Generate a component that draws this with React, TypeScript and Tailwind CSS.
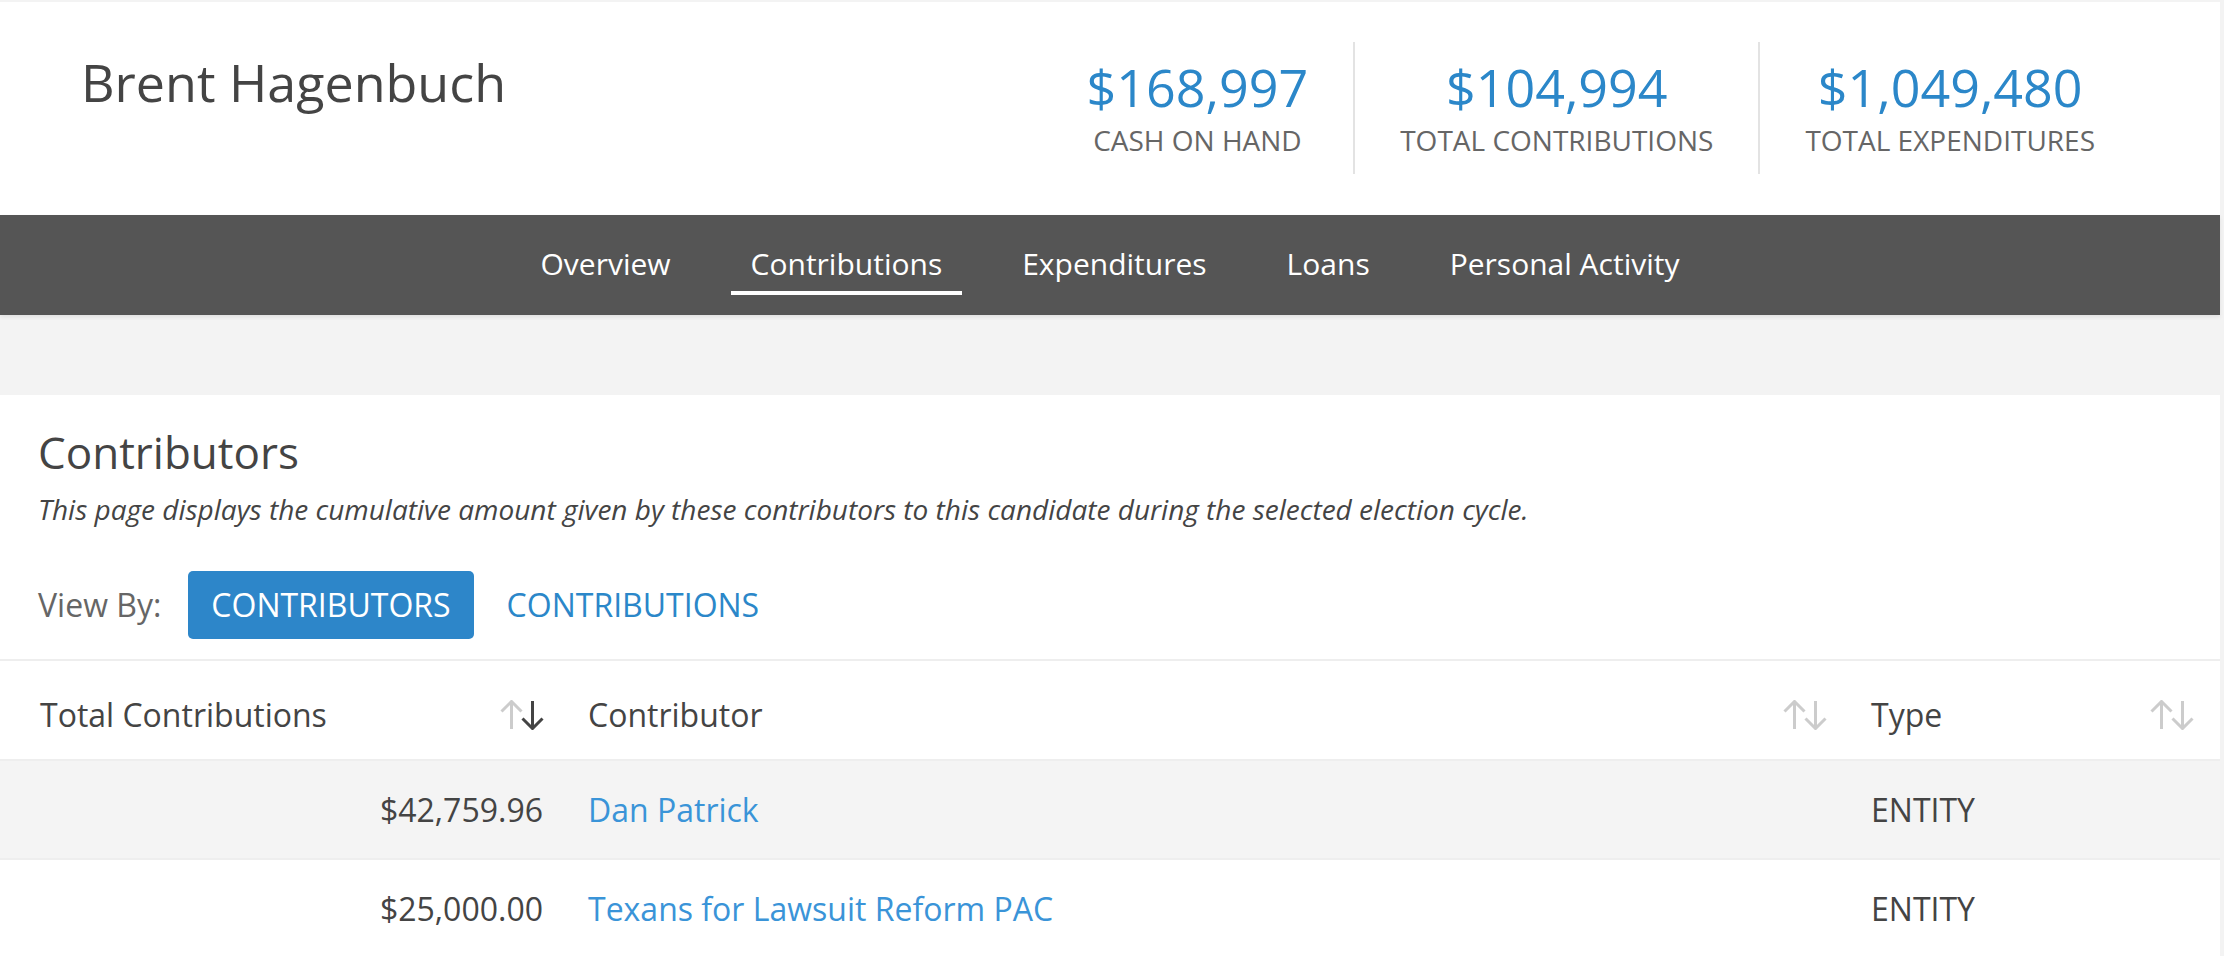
import React from 'react';

const stats = [
    { value: '$168,997', label: 'CASH ON HAND' },
    { value: '$104,994', label: 'TOTAL CONTRIBUTIONS' },
    { value: '$1,049,480', label: 'TOTAL EXPENDITURES' },
];

const tabs = ['Overview', 'Contributions', 'Expenditures', 'Loans', 'Personal Activity'];

const rows = [
    { amount: '$42,759.96', name: 'Dan Patrick', type: 'ENTITY' },
    { amount: '$25,000.00', name: 'Texans for Lawsuit Reform PAC', type: 'ENTITY' },
];

const SortIcon = ({ active = false }: { active?: boolean }) => (
    <svg width="45" height="30" viewBox="0 0 45 30" fill="none" strokeWidth="3" strokeLinecap="butt" strokeLinejoin="miter">
        <g stroke="#cccccc">
            <path d="M11.5 29V2" />
            <path d="M1.5 11.5L11.5 1.5L21.5 11.5" />
        </g>
        <g stroke={active ? '#444444' : '#cccccc'}>
            <path d="M32.5 1V28" />
            <path d="M22.5 18.5L32.5 28.5L42.5 18.5" />
        </g>
    </svg>
);

const App = () => {
    return (
        <div className="min-h-screen bg-[#f3f3f3] pt-[2px] pr-[4px] font-['Open_Sans',sans-serif] text-[#444]">
            <header className="bg-white h-[213px] flex justify-between pl-[81px] pr-[80px]">
                <h1 className="pt-[44px] text-[52px] leading-[71px] font-normal text-[#444]">Brent Hagenbuch</h1>
                <div className="flex mt-[40px] h-[132px]">
                    {stats.map((s, i) => (
                        <div key={s.label} className={`flex flex-col items-center px-[45px] pt-[10px] ${i > 0 ? 'border-l-2 border-[#e3e3e3]' : ''}`}>
                            <div className="text-[52px] leading-[70px] text-[#2b87c9]">{s.value}</div>
                            <div className="text-[28px] leading-[37px] text-[#666]">{s.label}</div>
                        </div>
                    ))}
                </div>
            </header>

            <nav className="bg-[#555555] h-[100px] flex justify-center gap-[40px] shadow-[0_2px_4px_rgba(0,0,0,0.08)] relative">
                {tabs.map(t => (
                    <div key={t} className="flex flex-col pt-[28px]">
                        <span className="px-[20px] text-[30px] leading-[41px] text-white whitespace-nowrap">{t}</span>
                        <span className={`mt-[7px] h-[4px] ${t === 'Contributions' ? 'bg-white' : 'bg-transparent'}`} />
                    </div>
                ))}
            </nav>

            <main className="mt-[80px] bg-white">
                <div className="pl-[38px] pt-[27px] pb-[20px]">
                    <h2 className="text-[44px] leading-[60px] font-normal text-[#444]">Contributors</h2>
                    <p className="mt-[9px] text-[28px] leading-[37px] italic text-[#444]">
                        This page displays the cumulative amount given by these contributors to this candidate during the selected election cycle.
                    </p>
                    <div className="mt-[43px] flex items-center">
                        <span className="text-[32px] leading-[44px] text-[#666]">View By:</span>
                        <button className="ml-[27px] h-[68px] px-[23px] rounded-[5px] bg-[#2d86c9] text-white text-[32px] leading-[44px]">CONTRIBUTORS</button>
                        <button className="ml-[33px] text-[#2b87c9] text-[32px] leading-[44px]">CONTRIBUTIONS</button>
                    </div>
                </div>

                <div className="border-t-2 border-[#eeeeee]">
                    <div className="grid grid-cols-[567px_1283px_1fr] h-[100px] border-b-2 border-[#eeeeee] pt-[10px] text-[32px] leading-[44px]">
                        <div className="flex items-center justify-between pl-[40px] pr-[22px]">
                            <span>Total Contributions</span>
                            <SortIcon active />
                        </div>
                        <div className="flex items-center justify-between pl-[21px] pr-[22px]">
                            <span>Contributor</span>
                            <SortIcon />
                        </div>
                        <div className="flex items-center justify-between pl-[21px] pr-[25px]">
                            <span>Type</span>
                            <SortIcon />
                        </div>
                    </div>
                    {rows.map((r, i) => (
                        <div key={r.name} className={`grid grid-cols-[567px_1283px_1fr] h-[99px] items-center border-b-2 border-[#eeeeee] text-[32px] leading-[44px] ${i % 2 === 0 ? 'bg-[#f4f4f4]' : 'bg-white'}`}>
                            <div className="text-right pl-[40px] pr-[24px]">{r.amount}</div>
                            <div className="pl-[21px]"><a href="#" className="text-[#3a94d8]">{r.name}</a></div>
                            <div className="pl-[21px]">{r.type}</div>
                        </div>
                    ))}
                </div>
            </main>
        </div>
    );
};

export default App;
